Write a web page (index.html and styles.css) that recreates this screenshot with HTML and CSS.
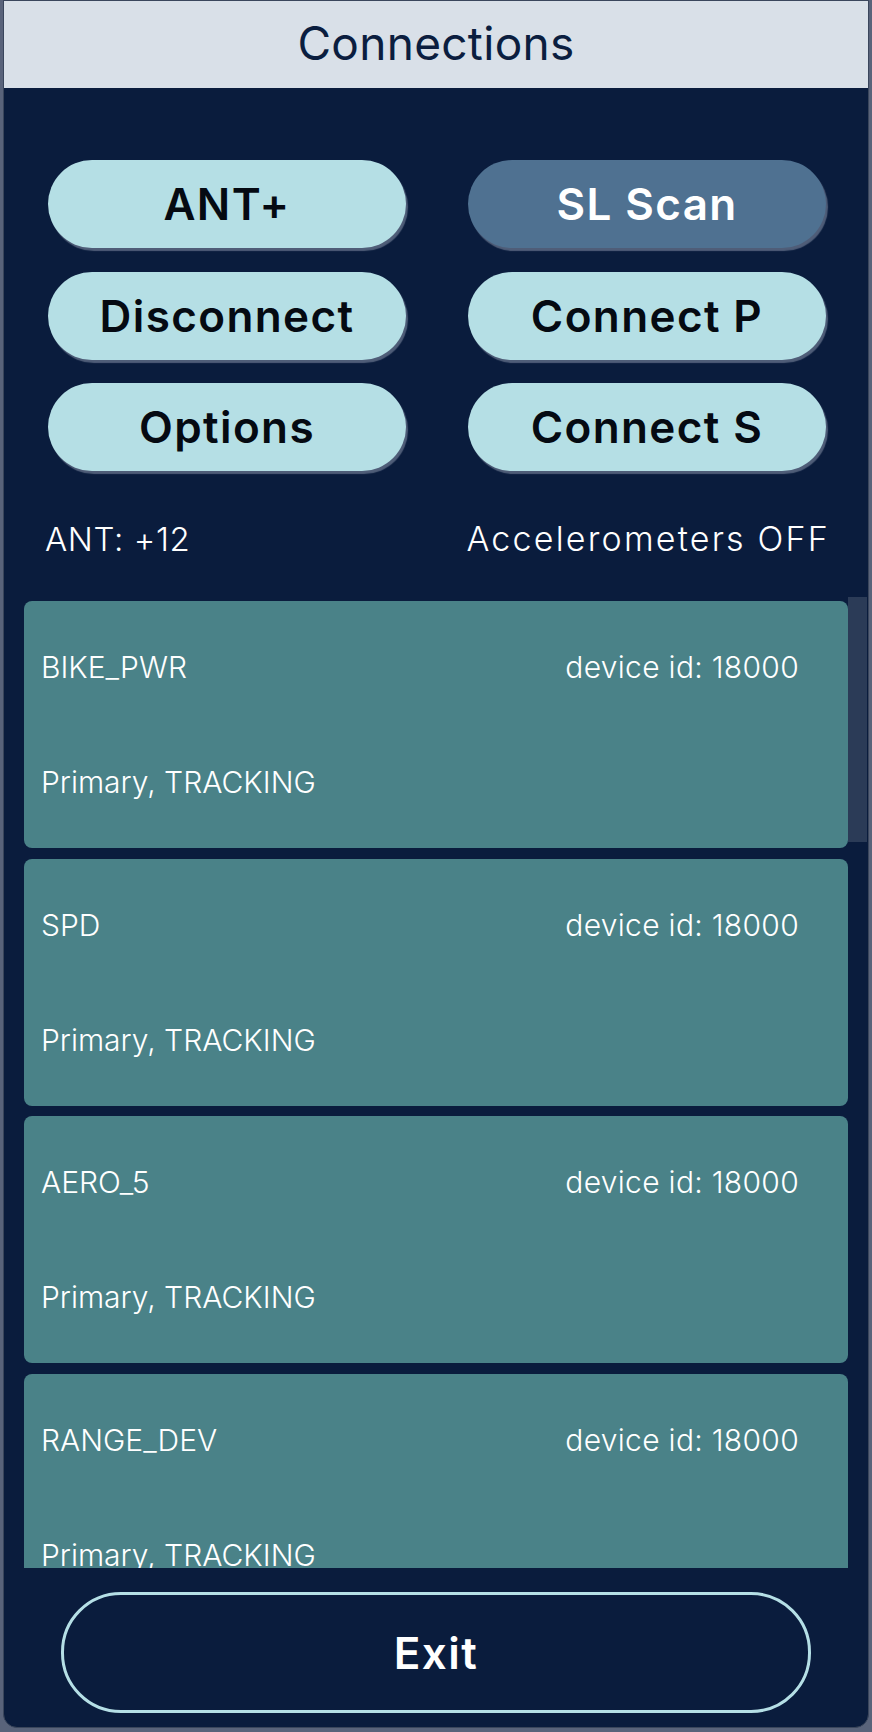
FILE: index.html
```html
<!DOCTYPE html>
<html lang="en">
<head>
<meta charset="utf-8">
<title>Connections</title>
<link rel="stylesheet" href="styles.css">
</head>
<body>
<div class="dialog">
  <header class="header"><h1 class="title">Connections</h1></header>
  <div class="buttons">
    <button class="btn">ANT+</button>
    <button class="btn btn-active">SL Scan</button>
    <button class="btn">Disconnect</button>
    <button class="btn">Connect P</button>
    <button class="btn">Options</button>
    <button class="btn">Connect S</button>
  </div>
  <div class="status">
    <span class="status-left">ANT: +12</span>
    <span class="status-right">Accelerometers OFF</span>
  </div>
  <div class="list-wrap">
    <div class="list">
      <div class="card">
        <div class="card-row"><span>BIKE_PWR</span><span class="dev-id">device id: 18000</span></div>
        <div class="card-row"><span>Primary, TRACKING</span></div>
      </div>
      <div class="card">
        <div class="card-row"><span>SPD</span><span class="dev-id">device id: 18000</span></div>
        <div class="card-row"><span>Primary, TRACKING</span></div>
      </div>
      <div class="card">
        <div class="card-row"><span>AERO_5</span><span class="dev-id">device id: 18000</span></div>
        <div class="card-row"><span>Primary, TRACKING</span></div>
      </div>
      <div class="card">
        <div class="card-row"><span>RANGE_DEV</span><span class="dev-id">device id: 18000</span></div>
        <div class="card-row"><span>Primary, TRACKING</span></div>
      </div>
    </div>
    <div class="scroll-track"><div class="scroll-thumb"></div></div>
  </div>
  <div class="exit-wrap"><button class="exit">Exit</button></div>
</div>
</body>
</html>
```
FILE: styles.css
```css
html, body {
  margin: 0;
  padding: 0;
}
body {
  background: #59637a;
  width: 872px;
  height: 1732px;
  overflow: hidden;
}
.dialog {
  box-sizing: border-box;
  margin-left: 3px;
  width: 866px;
  height: 1728px;
  background: #0a1c3d;
  border: 1px solid #3a465c;
  border-radius: 0 0 14px 14px;
  display: flex;
  flex-direction: column;
  overflow: hidden;
}
.header {
  height: 87px;
  background: #d9e0e8;
  display: flex;
  align-items: center;
  justify-content: center;
  flex-shrink: 0;
}
.title {
  margin: 0;
  font-family: "Inter", "Noto Sans", sans-serif;
  font-weight: 400;
  font-size: 46px;
  color: #0b1e3f;
  letter-spacing: 0.3px;
  position: relative;
  top: -2px;
}
.buttons {
  display: grid;
  grid-template-columns: 358px 358px;
  column-gap: 62px;
  row-gap: 23.5px;
  padding: 72px 0 0 44px;
}
.btn {
  height: 88px;
  border: none;
  border-radius: 44px;
  background: #b5dfe5;
  color: #050a12;
  font-family: "Inter", "Noto Sans", sans-serif;
  font-weight: 600;
  font-size: 44px;
  letter-spacing: 1.4px;
  box-shadow: 2px 3px 1px #4f5d78;
  padding: 0;
}
.btn-active {
  background: #4f7191;
  color: #ffffff;
}
.status {
  display: flex;
  justify-content: space-between;
  align-items: center;
  padding: 0 40px 0 41px;
  margin-top: 48px;
  height: 40px;
  line-height: 40px;
  font-family: "Inter", "Noto Sans", sans-serif;
  font-weight: 300;
  font-size: 33px;
  color: #ffffff;
}
.status-left {
  letter-spacing: 0.6px;
}
.status-right {
  font-size: 34px;
  letter-spacing: 2.2px;
  margin-right: -2px;
}
.list-wrap {
  display: flex;
  margin-top: 38px;
  height: 971px;
  padding-left: 20px;
  padding-right: 1px;
}
.list {
  flex: 1;
  overflow: hidden;
  padding-top: 4px;
  display: flex;
  flex-direction: column;
  gap: 10.7px;
}
.card {
  flex-shrink: 0;
  box-sizing: border-box;
  height: 247px;
  background: #4a8288;
  border-radius: 8px;
  padding: 46px 49px 46px 17px;
  display: flex;
  flex-direction: column;
  justify-content: space-between;
  font-family: "Inter", "Noto Sans", sans-serif;
  font-weight: 300;
  font-size: 30px;
  color: #ffffff;
}
.card-row {
  display: flex;
  justify-content: space-between;
  height: 40px;
  line-height: 40px;
}
.dev-id {
  letter-spacing: 0.3px;
}
.scroll-track {
  width: 19px;
  flex-shrink: 0;
}
.scroll-thumb {
  height: 245px;
  background: #2b3b57;
}
.exit-wrap {
  display: flex;
  justify-content: center;
  margin-top: 24px;
}
.exit {
  box-sizing: border-box;
  width: 750px;
  height: 121px;
  border: 3px solid #b5dfe6;
  border-radius: 60px;
  background: transparent;
  color: #ffffff;
  font-family: "Inter", "Noto Sans", sans-serif;
  font-weight: 600;
  font-size: 44px;
  letter-spacing: 1.5px;
  padding: 0;
}
```
